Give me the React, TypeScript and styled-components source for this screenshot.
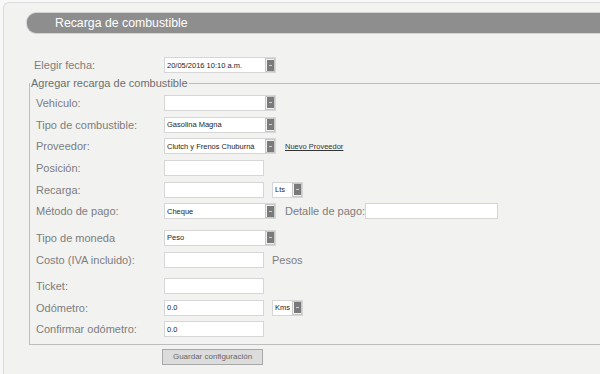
import React from "react";
import styled, { createGlobalStyle } from "styled-components";

const Global = createGlobalStyle`
  html, body {
    margin: 0;
    background-color: #f8f8f8;
    overflow: hidden;
  }
  body {
    font-family: "Liberation Sans", Arial, sans-serif;
  }
`;

const Panel = styled.main`
  margin: 2px 0 0 3px;
  width: calc(100vw - 3px);
  height: 372px;
  box-sizing: border-box;
  padding: 10px 0 0 23px;
  background-color: #f2f2f1;
  border-top: 1px solid #dcdcdc;
  border-left: 1px solid #dcdcdc;
  border-top-left-radius: 6px;
`;

const TitleBar = styled.div`
  height: 20px;
  display: flex;
  align-items: center;
  padding-left: 28px;
  background-color: #8e8e8e;
  border-radius: 9px 0 0 9px;
  box-shadow: -1px 0 0 0 #d2d2d2, 0 -1px 0 0 #d2d2d2, 0 1px 0 0 #d2d2d2;

  h1 {
    margin: 0;
    font-size: 12.3px;
    font-weight: 400;
    color: #fff;
  }
`;

const Form = styled.form`
  display: flex;
  flex-direction: column;
  align-items: flex-start;
`;

const DateRow = styled.div`
  display: flex;
  align-items: center;
  height: 22px;
  margin-top: 21px;
  padding-left: 7px;
`;

const Fieldset = styled.fieldset`
  align-self: stretch;
  margin: 1px 0 0 2px;
  padding: 2px 0 3.5px 0;
  border: 1px solid #bdbdbd;
  border-right: none;
  min-inline-size: 0;

  legend {
    padding: 0 1px;
    font-size: 11px;
    line-height: 13px;
    color: #6e6e6e;
  }
`;

const Row = styled.div<{ $extra?: number }>`
  display: flex;
  align-items: center;
  height: 21.7px;
  margin-top: ${({ $extra }) => $extra ?? 0}px;
  padding-left: 6px;
`;

const Label = styled.span<{ $w?: number }>`
  width: ${({ $w }) => $w ?? 128}px;
  flex-shrink: 0;
  font-size: 11px;
  color: #7d7d7d;
  white-space: nowrap;
`;

const Side = styled.span<{ $ml?: number }>`
  margin-left: ${({ $ml }) => $ml ?? 9}px;
  font-size: 11px;
  color: #7d7d7d;
  white-space: nowrap;
`;

const TextBox = styled.div<{ $w?: number; $ml?: number }>`
  box-sizing: border-box;
  width: ${({ $w }) => $w ?? 100}px;
  height: 16px;
  margin-left: ${({ $ml }) => $ml ?? 0}px;
  padding-left: 2px;
  display: flex;
  align-items: center;
  background-color: #fff;
  border: 1px solid #d6d6d6;
  font-size: 7.5px;
  color: #1e1e1e;
  white-space: nowrap;
`;

const SelectBox = styled.div<{ $w?: number; $ml?: number }>`
  box-sizing: border-box;
  width: ${({ $w }) => $w ?? 112}px;
  height: 16px;
  margin-left: ${({ $ml }) => $ml ?? 0}px;
  display: flex;
  align-items: center;
  background-color: #fff;
  border: 1px solid #d6d6d6;

  .value {
    flex: 1;
    padding-left: 2px;
    font-size: 7.5px;
    color: #1e1e1e;
    white-space: nowrap;
    overflow: hidden;
  }
`;

const Arrow = styled.span`
  box-sizing: border-box;
  width: 10px;
  height: 14px;
  background-color: #f2f2f1;
  border: 1px solid #c8c8c8;
  display: flex;
  align-items: center;
  justify-content: center;

  &::before {
    content: "";
    width: 7px;
    height: 11px;
    background-color: #7a7a7a;
    background-image: linear-gradient(#d0d0d0, #d0d0d0);
    background-size: 3px 1px;
    background-repeat: no-repeat;
    background-position: center;
  }
`;

const LinkText = styled.a`
  margin-left: 9px;
  font-size: 7.5px;
  color: #333;
  text-decoration: underline;
`;

const SaveButton = styled.button`
  margin: 4px 0 0 135px;
  width: 101px;
  height: 16px;
  padding: 0;
  background-color: #dcdcdc;
  border: 1px solid #a8a8a8;
  font-family: "Liberation Sans", Arial, sans-serif;
  font-size: 8px;
  color: #666;
`;

const Select = ({ value = "", w, ml }: { value?: string; w?: number; ml?: number }) => (
  <SelectBox $w={w} $ml={ml}>
    <span className="value">{value}</span>
    <Arrow />
  </SelectBox>
);

const App = () => {
  return (
    <>
      <Global />
      <Panel>
        <TitleBar>
          <h1>Recarga de combustible</h1>
        </TitleBar>
        <Form onSubmit={(e) => e.preventDefault()}>
          <DateRow>
            <Label $w={130}>Elegir fecha:</Label>
            <Select value="20/05/2016 10:10 a.m." />
          </DateRow>
          <Fieldset>
            <legend>Agregar recarga de combustible</legend>
            <Row>
              <Label>Vehiculo:</Label>
              <Select />
            </Row>
            <Row>
              <Label>Tipo de combustible:</Label>
              <Select value="Gasolina Magna" />
            </Row>
            <Row>
              <Label>Proveedor:</Label>
              <Select value="Clutch y Frenos Chuburná" />
              <LinkText>Nuevo Proveedor</LinkText>
            </Row>
            <Row>
              <Label>Posición:</Label>
              <TextBox />
            </Row>
            <Row>
              <Label>Recarga:</Label>
              <TextBox />
              <Select value="Lts" w={31} ml={8} />
            </Row>
            <Row>
              <Label>Método de pago:</Label>
              <Select value="Cheque" />
              <Side>Detalle de pago:</Side>
              <TextBox $w={133} />
            </Row>
            <Row $extra={5}>
              <Label>Tipo de moneda</Label>
              <Select value="Peso" />
            </Row>
            <Row>
              <Label>Costo (IVA incluido):</Label>
              <TextBox />
              <Side $ml={8}>Pesos</Side>
            </Row>
            <Row $extra={4.5}>
              <Label>Ticket:</Label>
              <TextBox />
            </Row>
            <Row>
              <Label>Odómetro:</Label>
              <TextBox>0.0</TextBox>
              <Select value="Kms" w={31} ml={8} />
            </Row>
            <Row>
              <Label>Confirmar odómetro:</Label>
              <TextBox>0.0</TextBox>
            </Row>
          </Fieldset>
          <SaveButton type="button">Guardar configuración</SaveButton>
        </Form>
      </Panel>
    </>
  );
};

export default App;
